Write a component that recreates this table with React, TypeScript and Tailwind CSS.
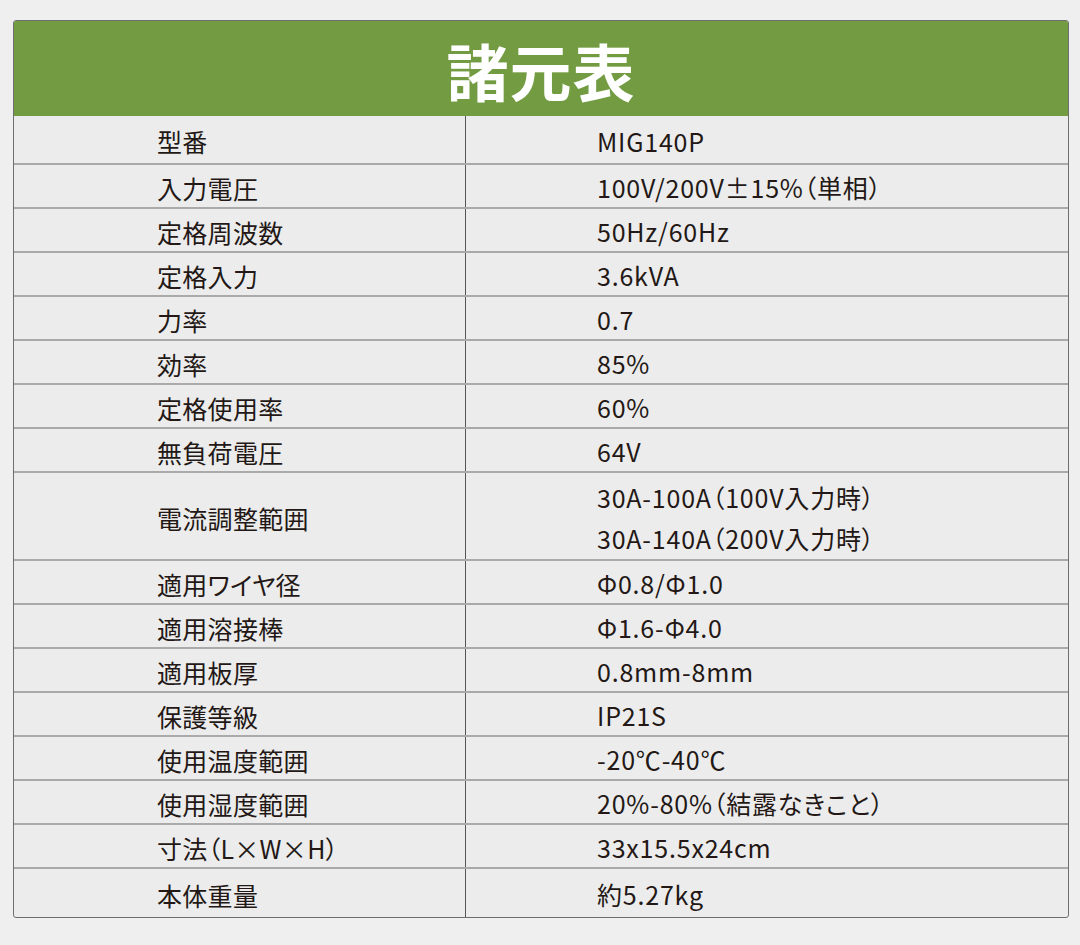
const specs: { label: string; values: string[] }[] = [
  { label: "型番", values: ["MIG140P"] },
  { label: "入力電圧", values: ["100V/200V±15%（単相）"] },
  { label: "定格周波数", values: ["50Hz/60Hz"] },
  { label: "定格入力", values: ["3.6kVA"] },
  { label: "力率", values: ["0.7"] },
  { label: "効率", values: ["85%"] },
  { label: "定格使用率", values: ["60%"] },
  { label: "無負荷電圧", values: ["64V"] },
  { label: "電流調整範囲", values: ["30A-100A（100V入力時）", "30A-140A（200V入力時）"] },
  { label: "適用ワイヤ径", values: ["Φ0.8/Φ1.0"] },
  { label: "適用溶接棒", values: ["Φ1.6-Φ4.0"] },
  { label: "適用板厚", values: ["0.8mm-8mm"] },
  { label: "保護等級", values: ["IP21S"] },
  { label: "使用温度範囲", values: ["-20℃-40℃"] },
  { label: "使用湿度範囲", values: ["20%-80%（結露なきこと）"] },
  { label: "寸法（L×W×H）", values: ["33x15.5x24cm"] },
  { label: "本体重量", values: ["約5.27kg"] },
];

const App = () => {
  return (
    <div
      className="w-[1080px] h-[945px] bg-[#efefef] pt-[20px] pl-[13px]"
      style={{ fontFamily: '"Noto Sans CJK JP", "Noto Sans", sans-serif' }}
    >
      <div className="w-[1056px] border border-[#6e6e6e] rounded-[3px] overflow-hidden bg-[#ececec]">
        {/* Title */}
        <div className="h-[95px] bg-[#739c42] flex items-center justify-center pt-[2px]">
          <h1 className="text-white font-bold text-[62px] leading-none tracking-[1px]">諸元表</h1>
        </div>

        {/* Rows */}
        {specs.map((spec, i) => {
          const first = i === 0;
          const last = i === specs.length - 1;
          const h = first ? "h-[47px]" : last ? "h-[50px]" : spec.values.length > 1 ? "h-[88px]" : "h-[44px]";
          return (
            <div
              key={spec.label}
              className={`flex ${h} ${first ? "" : "border-t-2 border-[#aaaaaa]"} text-[#231815] text-[25px] font-normal [font-feature-settings:'palt']`}
            >
              <div className="w-[452px] pl-[143px] flex items-center pt-[5px] border-r border-[#555555] tracking-[0.3px]">
                {spec.label}
              </div>
              <div className="flex-1 pl-[131px] flex flex-col justify-center pt-[4px] tracking-[0.8px]">
                {spec.values.map((v) => (
                  <div key={v} className={spec.values.length > 1 ? "h-[44px] flex items-center" : ""}>
                    {v}
                  </div>
                ))}
              </div>
            </div>
          );
        })}
      </div>
    </div>
  );
};

export default App;
